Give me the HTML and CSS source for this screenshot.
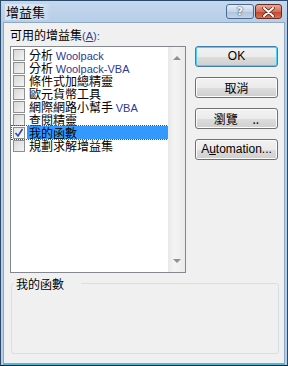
FILE: index.html
```html
<!doctype html>
<html lang="zh-Hant">
  <head>
    <meta charset="utf-8">
    <title>增益集</title>
    <link rel="stylesheet" href="styles.css">
  </head>
  <body>
    <div class="window">
      <div class="titlebar">
        <span class="title">增益集</span>
        <div class="caption-buttons">
          <span class="cap help">?</span>
          <span class="cap close">
            <svg width="13" height="10" viewBox="0 0 13 10">
              <path d="M2 1 L11 9 M11 1 L2 9" stroke="#5a1a10" stroke-width="3.4" stroke-linecap="round"/>
              <path d="M2 1 L11 9 M11 1 L2 9" stroke="#fff" stroke-width="2" stroke-linecap="round"/>
            </svg>
          </span>
        </div>
      </div>

      <div class="client">
        <div class="label">可用的增益集<span class="lat">(<u>A</u>):</span></div>

        <div class="main">
          <div class="listbox">
            <ul class="items">
              <li><span class="box"></span><span class="txt">分析 <span class="lat">Woolpack</span></span></li>
              <li><span class="box"></span><span class="txt">分析 <span class="lat">Woolpack-VBA</span></span></li>
              <li><span class="box"></span><span class="txt">條件式加總精靈</span></li>
              <li><span class="box"></span><span class="txt">歐元貨幣工具</span></li>
              <li><span class="box"></span><span class="txt">網際網路小幫手 <span class="lat">VBA</span></span></li>
              <li><span class="box"></span><span class="txt">查閱精靈</span></li>
              <li class="selected"><span class="box checked">
                <svg width="10" height="10" viewBox="0 0 10 10"><path d="M1.5 5 L4 8 L8.5 1" fill="none" stroke="#2a4bb0" stroke-width="1.6"/></svg>
              </span><span class="txt hl">我的函數</span></li>
              <li><span class="box"></span><span class="txt">規劃求解增益集</span></li>
            </ul>
            <div class="scrollbar">
              <span class="arrow up"></span>
              <span class="arrow down"></span>
            </div>
          </div>

          <div class="buttons">
            <button class="btn latin default">OK</button>
            <button class="btn">取消</button>
            <button class="btn">瀏覽 <span class="dots">..</span></button>
            <button class="btn latin">A<u>u</u>tomation...</button>
          </div>
        </div>

        <fieldset class="group">
          <legend>我的函數</legend>
        </fieldset>
      </div>
    </div>
  </body>
</html>
```

FILE: styles.css
```css
html, body {
  margin: 0;
  padding: 0;
}

body {
  font-family: "Noto Sans CJK TC", "Noto Sans", sans-serif;
  font-size: 12px;
  color: #000;
  background: #f0f0f0;
}

.window {
  width: 288px;
  height: 366px;
  box-sizing: border-box;
  display: flex;
  flex-direction: column;
  background: linear-gradient(#c4d8ee, #b6cde8 22px);
  border: 1px solid #2c4a6b;
  border-bottom-color: #101820;
}

.titlebar {
  height: 21px;
  display: flex;
  align-items: center;
  justify-content: space-between;
  padding: 0 5px 0 4px;
}

.title {
  font-size: 13px;
  line-height: 16px;
  padding: 0 6px 0 1px;
  margin-top: 1px;
  background: linear-gradient(90deg, rgba(255,255,255,0.45), rgba(255,255,255,0.3) 80%, rgba(255,255,255,0));
}

.caption-buttons {
  display: flex;
  gap: 1px;
  align-self: flex-start;
  margin-top: 3px;
}

.cap {
  height: 13px;
  border: 1px solid #4d6b8c;
  border-radius: 3px;
  display: flex;
  align-items: center;
  justify-content: center;
}

.help {
  width: 26px;
  background: linear-gradient(#e4edf7, #c5d5e8 50%, #aec3dc 51%, #c2d4ea);
  font-family: "DejaVu Sans", sans-serif;
  font-weight: bold;
  font-size: 11px;
  color: #fff;
  text-shadow: 0 0 2px #30475f, 0 0 1px #30475f;
}

.close {
  width: 25px;
  border-color: #6b2a20;
  background: linear-gradient(#e9a99a, #d26f59 50%, #c2442a 51%, #d7735a);
}

.client {
  flex: 1;
  margin: 0 2px;
  padding: 4px 6px 8px 6px;
  background: #f0f0f0;
  border: 1px solid #8ea7c2;
  border-bottom: 2px solid #3cc0e6;
  display: flex;
  flex-direction: column;
}

.lat {
  font-family: "Liberation Sans", sans-serif;
  font-size: 11px;
  color: #2a3a96;
}

.label {
  line-height: 15px;
  height: 15px;
}

.label .lat {
  color: #2f3f9a;
}

.main {
  display: flex;
  margin-top: 4px;
  gap: 9px;
}

.listbox {
  width: 176px;
  height: 227px;
  box-sizing: border-box;
  border: 1px solid #828790;
  background: #fff;
  display: flex;
}

.items {
  list-style: none;
  margin: 0;
  padding: 1px 0 0 1px;
  flex: 1;
}

.items li {
  height: 13px;
  display: flex;
  align-items: center;
  white-space: nowrap;
}

.txt {
  line-height: 13px;
  height: 13px;
}

.box {
  width: 10px;
  height: 10px;
  margin: 0 4px 0 1px;
  border: 1px solid #8e8f8f;
  background: linear-gradient(135deg, #d8d8d8, #f4f4f4);
  display: flex;
  align-items: center;
  justify-content: center;
  flex: none;
}

.box.checked {
  background: linear-gradient(135deg, #e4e4e4, #fbfbfb);
}

.selected {
  outline: 1px dotted #555;
}

.hl {
  flex: 1;
  background: #3399ff;
  margin-left: -2px;
  padding-left: 2px;
}

.scrollbar {
  width: 17px;
  flex: none;
  background: linear-gradient(90deg, #e8e8e8, #f4f4f4 40%, #eaeaea);
  display: flex;
  flex-direction: column;
  justify-content: space-between;
  align-items: center;
  padding: 9px 0 9px;
  box-sizing: border-box;
}

.arrow {
  width: 0;
  height: 0;
  border-left: 4px solid transparent;
  border-right: 4px solid transparent;
}

.arrow.up {
  border-bottom: 4px solid #909090;
}

.arrow.down {
  border-top: 4px solid #909090;
}

.buttons {
  display: flex;
  flex-direction: column;
  gap: 10px;
}

.btn {
  width: 83px;
  height: 21px;
  padding: 0;
  border: 1px solid #707070;
  border-radius: 3px;
  background: linear-gradient(#f2f2f2, #ebebeb 50%, #dddddd 51%, #cfcfcf);
  box-shadow: inset 0 0 0 1px #fcfcfc;
  font-family: "Noto Sans CJK TC", "Noto Sans", sans-serif;
  font-size: 12px;
  line-height: 17px;
  color: #000;
}

.btn.latin {
  font-family: "Liberation Sans", sans-serif;
  font-size: 12px;
}

.btn.default {
  border-color: #3c7fb1;
  box-shadow: inset 0 0 0 1px #48d4f8;
}

.dots {
  margin-left: 12px;
}

.group {
  margin: 4px 0 0 1px;
  width: 268px;
  height: 77px;
  box-sizing: border-box;
  padding: 0;
  border: 1px solid #d5dfe5;
  border-radius: 3px;
}

.group legend {
  padding: 0 17px 0 2px;
  margin-left: 2px;
  line-height: 13px;
}
```
